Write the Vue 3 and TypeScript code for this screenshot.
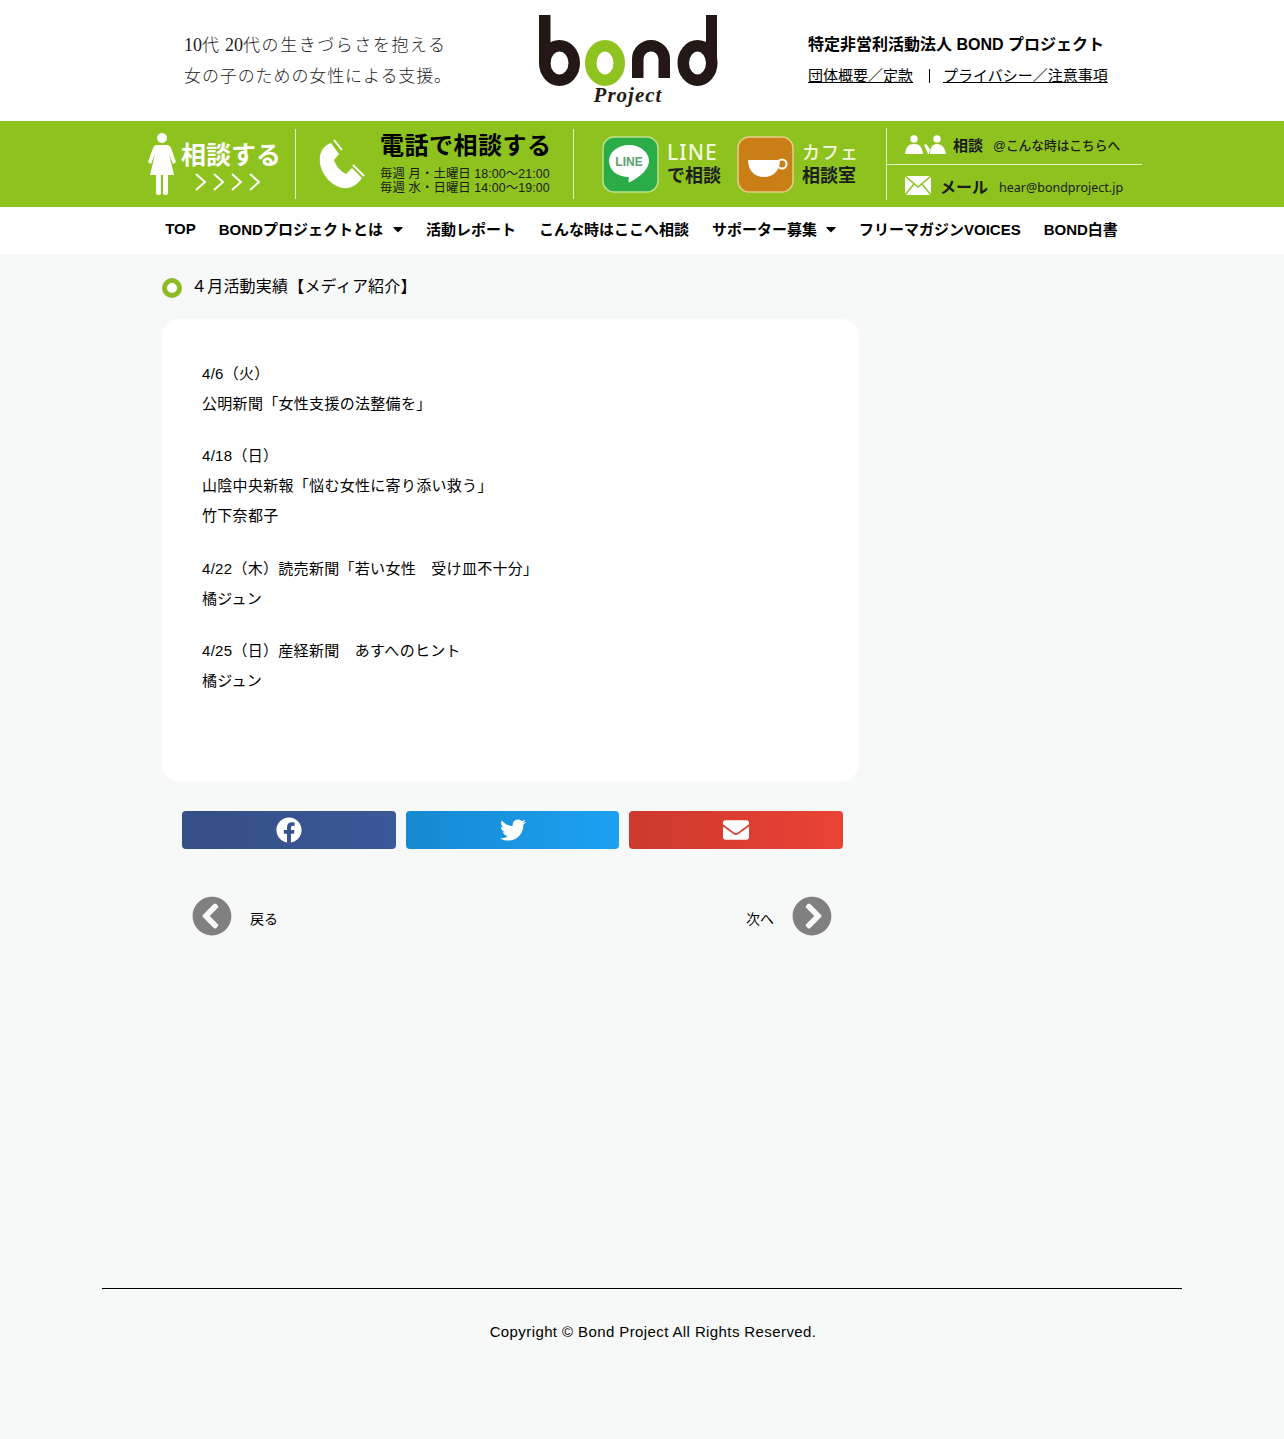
<template>
  <div class="page">
    <header class="top">
      <div class="slogan">
        <p>10<span class="j wide">代</span> 20<span class="j wide">代の生きづらさを抱える</span></p>
        <p class="j">女の子のための女性による支援。</p>
      </div>
      <div class="logo">
        <svg width="180" height="72" viewBox="0 0 180 72">
          <rect x="0" y="0" width="11.500" height="48" fill="#231815" />
          <ellipse cx="20.500" cy="48" rx="14.750" ry="17.250" fill="none" stroke="#231815" stroke-width="11.500" />
          <ellipse cx="66" cy="48" rx="14.250" ry="17.250" fill="none" stroke="#8fc31f" stroke-width="11.500" />
          <path d="M98.750 63V44a13.250 13.250 0 0 1 26.500 0v19" fill="none" stroke="#231815" stroke-width="11.500" />
          <ellipse cx="158.500" cy="48" rx="14.250" ry="17.250" fill="none" stroke="#231815" stroke-width="11.500" />
          <rect x="167" y="0" width="11" height="48" fill="#231815" />
        </svg>
        <span class="project">Project</span>
      </div>
      <div class="org">
        <strong>特定非営利活動法人 BOND プロジェクト</strong>
        <div class="org-links">
          <a>団体概要／定款</a>
          <i></i>
          <a>プライバシー／注意事項</a>
        </div>
      </div>
    </header>

    <div class="band">
      <div class="b-consult">
        <svg class="woman" width="28" height="62" viewBox="0 0 28 62" fill="#fff">
          <circle cx="14" cy="5" r="5" />
          <path d="M9 12h10c2 0 3 1 4 3l5 14-3 2-4-10 5 21H2l5-21-4 10-3-2 5-14c1-2 2-3 4-3z" />
          <rect x="8" y="41" width="5" height="21" rx="2" />
          <rect x="15" y="41" width="5" height="21" rx="2" />
        </svg>
        <div class="b-consult-text">
          <span>相談する</span>
          <svg width="66" height="18" viewBox="0 0 66 18" fill="none" stroke="#fff" stroke-width="2">
            <path v-for="x in chevrons" :key="x" :d="`M${x} 1l9 8-9 8`" />
          </svg>
        </div>
      </div>

      <div class="b-phone">
        <svg width="46" height="50" viewBox="0 0 46 50" fill="#fff" stroke="#fff">
          <path d="M12 4L20 15L15 21C17 27 21 32 27 35L33 29L43 39C38 46 32 50 24 49C9 46-1 30 1 17C2 11 6 6 12 4z" stroke="none" />
          <path d="M15 1l8 10" stroke-width="2" />
          <path d="M34 26l11 11" stroke-width="2" />
        </svg>
        <div class="b-phone-text">
          <b>電話で相談する</b>
          <small>毎週 月・土曜日 18:00～21:00</small>
          <small>毎週 水・日曜日 14:00～19:00</small>
        </div>
      </div>

      <div class="b-apps">
        <div class="app">
          <svg width="58" height="58" viewBox="0 0 58 58">
            <rect x="1" y="1" width="55" height="55" rx="11" fill="#2aac48" stroke="#bfe08a" stroke-width="1.500" />
            <path d="M27 9c11 0 20 7 20 16 0 8-9 16-19 21-1 .5-2 0-1.500-1.500l.5-3.500C15 41 7 34 7 25 7 16 16 9 27 9z" fill="#fff" />
            <text x="27" y="30" text-anchor="middle" class="line-mark">LINE</text>
          </svg>
          <div class="app-label"><span>LINE</span><b>で相談</b></div>
        </div>
        <div class="app">
          <svg width="58" height="58" viewBox="0 0 58 58">
            <rect x="1" y="1" width="55" height="55" rx="11" fill="#c97f16" stroke="#e3cf8a" stroke-width="1.500" />
            <path d="M11 24h32c0 10-6 17-16 17S11 34 11 24z" fill="#fff" />
            <circle cx="45" cy="28" r="4.500" fill="none" stroke="#fff" stroke-width="2" />
          </svg>
          <div class="app-label cafe"><span>カフェ</span><b>相談室</b></div>
        </div>
      </div>

      <div class="b-contact">
        <div class="c-row">
          <svg width="41" height="22" viewBox="0 0 41 22" fill="#fff">
            <circle cx="9" cy="5" r="3.700" />
            <path d="M0 20C1 13 3 10 9 10s8 3 9 10z" />
            <circle cx="32" cy="5" r="3.700" />
            <path d="M25 20c0-6 2-10 7-10s8 4 9 10z" />
            <path d="M19 11l2-1 4 5-1 5h-1z" />
          </svg>
          <b>相談</b>
          <span>@こんな時はこちらへ</span>
        </div>
        <div class="c-row mail">
          <svg width="26" height="19" viewBox="0 0 26 19">
            <rect width="26" height="19" fill="#fff" />
            <path d="M0 0l13 11L26 0M0 19l9-11M26 19l-9-11" fill="none" stroke="#8dc21f" stroke-width="1.500" />
          </svg>
          <b>メール</b>
          <span>hear@bondproject.jp</span>
        </div>
      </div>
    </div>

    <nav class="nav">
      <a v-for="item in navItems" :key="item.label">
        {{ item.label }}
        <svg v-if="item.caret" width="10" height="16" viewBox="0 0 320 512"><path :d="caret" /></svg>
      </a>
    </nav>

    <main class="main">
      <h1 class="title"><i class="dot"></i>４月活動実績【メディア紹介】</h1>
      <article class="card">
        <div v-for="(block, i) in blocks" :key="i" class="block">
          <p v-for="line in block" :key="line">{{ line }}</p>
        </div>
      </article>

      <div class="share">
        <a v-for="s in shares" :key="s.name" :class="s.name">
          <svg width="26" height="26" viewBox="0 0 512 512" fill="#fff"><path :d="s.d" /></svg>
        </a>
      </div>

      <div class="pager">
        <a class="pg">
          <svg width="40" height="40" viewBox="0 0 512 512" fill="#808080"><path :d="arrowLeft" /></svg>
          <span>戻る</span>
        </a>
        <a class="pg">
          <span>次へ</span>
          <svg width="40" height="40" viewBox="0 0 512 512" fill="#808080"><path :d="arrowRight" /></svg>
        </a>
      </div>
    </main>

    <footer class="foot">
      <div class="foot-line"></div>
      <p>Copyright © Bond Project All Rights Reserved.</p>
    </footer>
  </div>
</template>

<script setup lang="ts">
const chevrons = [1, 19, 37, 55];

const navItems = [
  { label: 'TOP', caret: false },
  { label: 'BONDプロジェクトとは', caret: true },
  { label: '活動レポート', caret: false },
  { label: 'こんな時はここへ相談', caret: false },
  { label: 'サポーター募集', caret: true },
  { label: 'フリーマガジンVOICES', caret: false },
  { label: 'BOND白書', caret: false },
];

const blocks: string[][] = [
  ['4/6（火）', '公明新聞「女性支援の法整備を」'],
  ['4/18（日）', '山陰中央新報「悩む女性に寄り添い救う」', '竹下奈都子'],
  ['4/22（木）読売新聞「若い女性　受け皿不十分」', '橘ジュン'],
  ['4/25（日）産経新聞　あすへのヒント', '橘ジュン'],
];

const caret = 'M31.3 192h257.3c17.8 0 26.7 21.5 14.1 34.1L174.1 354.8c-7.8 7.8-20.5 7.8-28.3 0L17.2 226.1C4.6 213.5 13.5 192 31.3 192z';
const arrowLeft = 'M256 504C119 504 8 393 8 256S119 8 256 8s248 111 248 248-111 248-248 248zM142.1 273l135.5 135.5c9.4 9.4 24.6 9.4 33.9 0l17-17c9.4-9.4 9.4-24.6 0-33.9L226.9 256l101.6-101.6c9.4-9.4 9.4-24.6 0-33.9l-17-17c-9.4-9.4-24.6-9.4-33.9 0L142.1 239c-9.4 9.4-9.4 24.6 0 34z';
const arrowRight = 'M256 8c137 0 248 111 248 248S393 504 256 504 8 393 8 256 119 8 256 8zm113.9 231L234.4 103.5c-9.4-9.4-24.6-9.4-33.9 0l-17 17c-9.4 9.4-9.4 24.6 0 33.9L285.1 256 183.5 357.6c-9.4 9.4-9.4 24.6 0 33.9l17 17c9.4 9.4 24.6 9.4 33.9 0L369.9 273c9.4-9.4 9.4-24.6 0-34z';

const shares = [
  {
    name: 'fb',
    d: 'M504 256C504 119 393 8 256 8S8 119 8 256c0 123.78 90.69 226.38 209.25 245V327.69h-63V256h63v-54.64c0-62.15 37-96.48 93.67-96.48 27.14 0 55.52 4.84 55.52 4.84v61h-31.28c-30.8 0-40.41 19.12-40.41 38.73V256h68.78l-11 71.69h-57.78V501C413.31 482.38 504 379.78 504 256z',
  },
  {
    name: 'tw',
    d: 'M459.37 151.716c.325 4.548.325 9.097.325 13.645 0 138.72-105.583 298.558-298.558 298.558-59.452 0-114.68-17.219-161.137-47.106 8.447.974 16.568 1.299 25.34 1.299 49.055 0 94.213-16.568 130.274-44.832-46.132-.975-84.792-31.188-98.112-72.772 6.498.974 12.995 1.624 19.818 1.624 9.421 0 18.843-1.3 27.614-3.573-48.081-9.747-84.143-51.98-84.143-102.985v-1.299c13.969 7.797 30.214 12.67 47.431 13.319-28.264-18.843-46.781-51.005-46.781-87.391 0-19.492 5.197-37.36 14.294-52.954 51.655 63.675 129.3 105.258 216.365 109.807-1.624-7.797-2.599-15.918-2.599-24.04 0-57.828 46.782-104.934 104.934-104.934 30.213 0 57.502 12.67 76.67 33.137 23.715-4.548 46.456-13.32 66.599-25.34-7.798 24.366-24.366 44.833-46.132 57.827 21.117-2.273 41.584-8.122 60.426-16.243-14.292 20.791-32.161 39.308-52.628 54.253z',
  },
  {
    name: 'ml',
    d: 'M502.3 190.8c3.9-3.1 9.7-.2 9.7 4.7V400c0 26.5-21.5 48-48 48H48c-26.5 0-48-21.5-48-48V195.6c0-5 5.7-7.8 9.7-4.7 22.4 17.4 52.1 39.5 154.1 113.6 21.1 15.4 56.7 47.8 92.2 47.6 35.7.3 72-32.8 92.3-47.6 102-74.1 131.6-96.3 154-113.7zM256 320c23.2.4 56.6-29.2 73.4-41.4 132.7-96.3 142.8-104.7 173.4-128.7 5.8-4.5 9.2-11.5 9.2-18.9v-19c0-26.5-21.5-48-48-48H48C21.5 64 0 85.5 0 112v19c0 7.4 3.4 14.3 9.2 18.9 30.6 23.9 40.7 32.4 173.4 128.7 16.8 12.2 50.2 41.8 73.4 41.4z',
  },
];
</script>

<style>
body {
  background: #f7f9f8;
}
</style>

<style scoped>
.page {
  min-height: 1439px;
  background: #f7f9f8;
  color: #000;
  font-family: 'Liberation Sans', 'Noto Sans CJK JP', sans-serif;
}
p,
h1 {
  margin: 0;
}

.top {
  display: flex;
  height: 121px;
  background: #fff;
  box-sizing: border-box;
  padding-left: 184px;
}
.slogan {
  width: 355px;
  padding-top: 28px;
  color: #1c1c1c;
  font-family: 'Liberation Serif', 'Noto Sans CJK JP', serif;
  font-size: 18px;
  font-weight: 300;
  white-space: nowrap;
}
.slogan p {
  height: 31px;
  line-height: 31px;
}
.slogan .j {
  font-family: 'Noto Sans CJK JP', sans-serif;
  font-size: 17px;
  letter-spacing: 0.900px;
}
.slogan .wide {
  letter-spacing: 1.550px;
}
.logo {
  position: relative;
  width: 269px;
  padding-top: 15px;
}
.logo svg {
  display: block;
}
.project {
  display: block;
  width: 178px;
  color: #231815;
  font-family: 'Liberation Serif', serif;
  font-size: 21px;
  font-style: italic;
  font-weight: 700;
  line-height: 17px;
  letter-spacing: 1px;
  text-align: center;
}
.org {
  padding-top: 34px;
  font-size: 16px;
}
.org strong {
  display: block;
  line-height: 22px;
}
.org-links {
  display: flex;
  align-items: center;
  margin-top: 9px;
  font-size: 15px;
  line-height: 22px;
}
.org-links a {
  text-decoration: underline;
}
.org-links i {
  width: 1px;
  height: 14px;
  margin: 0 13px 0 16px;
  background: #000;
}

.band {
  display: flex;
  height: 86px;
  padding-left: 148px;
  background: #8dc21f;
}
.b-consult {
  display: flex;
  width: 147px;
  height: 70px;
  padding-top: 12px;
  color: #fff;
  box-sizing: border-box;
}
.woman {
  flex: none;
}
.b-consult-text {
  display: flex;
  flex-direction: column;
  align-items: center;
  margin-left: 5px;
  padding-top: 6px;
  font-size: 25px;
  font-weight: 700;
  line-height: 32px;
  white-space: nowrap;
}
.b-consult-text svg {
  margin: 2px 6px 0 0;
}
.b-phone {
  display: flex;
  width: 278px;
  height: 70px;
  margin-top: 8px;
  padding-left: 23px;
  border-left: 1px solid #e4f0c4;
  box-sizing: border-box;
}
.b-phone svg {
  flex: none;
  margin-top: 10px;
}
.b-phone-text {
  margin-left: 15px;
  white-space: nowrap;
}
.b-phone-text b {
  display: block;
  font-size: 24px;
  line-height: 34px;
  letter-spacing: 0.500px;
}
.b-phone-text small {
  display: block;
  color: #1b1b1b;
  font-size: 12.400px;
  line-height: 14px;
  letter-spacing: 0.080px;
}
.b-phone-text b + small {
  margin-top: 4px;
}
.b-apps {
  display: flex;
  gap: 16px;
  width: 313px;
  height: 70px;
  margin-top: 8px;
  padding: 7px 0 0 28px;
  border-left: 1px solid #e4f0c4;
  box-sizing: border-box;
}
.app {
  display: flex;
  gap: 7px;
}
.line-mark {
  fill: #5f9f6c;
  font-family: 'Liberation Sans', sans-serif;
  font-size: 12px;
  font-weight: 700;
}
.app-label {
  display: flex;
  flex-direction: column;
  align-items: flex-start;
  padding-top: 3px;
  white-space: nowrap;
}
.app-label span {
  color: #f4fbdc;
  font-family: 'Noto Sans', sans-serif;
  font-size: 21px;
  font-weight: 500;
  line-height: 26px;
  letter-spacing: 1px;
}
.app-label b {
  color: #1d1d1d;
  font-size: 18px;
  line-height: 22px;
}
.app-label.cafe span {
  margin-top: -1px;
  font-family: 'Noto Sans CJK JP', sans-serif;
  font-size: 18px;
}
.app-label.cafe b {
  margin-top: 1px;
}
.b-contact {
  display: flex;
  flex-direction: column;
  width: 256px;
  height: 72px;
  margin-top: 7px;
  border-left: 1px solid #e4f0c4;
  box-sizing: border-box;
}
.c-row {
  display: flex;
  align-items: center;
  gap: 7px;
  height: 36px;
  padding: 0 0 3px 18px;
  box-sizing: border-box;
  color: #1b1b1b;
  white-space: nowrap;
}
.c-row b {
  font-size: 15px;
}
.c-row span {
  margin-left: 3px;
  font-size: 12.700px;
  font-weight: 500;
}
.mail {
  gap: 9px;
  padding: 6px 0 0 18px;
  border-top: 1px solid #e4f0c4;
}
.mail b {
  margin-top: 1px;
  font-size: 16px;
}
.mail span {
  margin: 3px 0 0 2px;
  font-family: 'Noto Sans', sans-serif;
  font-size: 12.500px;
  font-weight: 400;
}

.nav {
  display: flex;
  justify-content: center;
  gap: 23px;
  height: 47px;
  padding: 0 1px 4px 0;
  box-sizing: border-box;
  background: #fff;
  font-size: 15px;
  font-weight: 700;
  white-space: nowrap;
}
.nav a {
  display: flex;
  align-items: center;
  gap: 9px;
}
.nav a:nth-child(2) {
  gap: 10px;
}

.main {
  width: 960px;
  margin: 0 auto;
}
.title {
  display: flex;
  align-items: center;
  height: 65px;
  font-size: 16px;
  font-weight: 400;
  line-height: 24px;
  letter-spacing: 0.200px;
}
.dot {
  flex: none;
  width: 10px;
  height: 10px;
  margin: 3px 9px 0 0;
  border: 5px solid #8dbb25;
  border-radius: 50%;
  background: #fff;
}
.card {
  width: 697px;
  height: 462px;
  padding: 40px;
  border-radius: 18px;
  background: #fff;
  box-sizing: border-box;
  font-size: 15px;
  line-height: 30px;
  letter-spacing: 0.300px;
}
.block + .block {
  margin-top: 22.400px;
}
.share {
  display: flex;
  gap: 10px;
  width: 661px;
  margin: 30px 0 0 20px;
}
.share a {
  display: flex;
  flex: 1;
  align-items: center;
  justify-content: center;
  height: 38px;
  border-radius: 4px;
}
.fb {
  background: linear-gradient(90deg, #344e86, #3b5998);
}
.tw {
  background: linear-gradient(90deg, #1589d0, #1da1f2);
}
.ml {
  background: linear-gradient(90deg, #cb3a2c, #ea4335);
}
.pager {
  display: flex;
  justify-content: space-between;
  width: 640px;
  margin: 47px 0 0 30px;
}
.pg {
  display: flex;
  align-items: center;
  gap: 18px;
  font-size: 14px;
}
.pg span {
  margin-top: 3px;
}

.foot {
  width: 1080px;
  margin: 352px auto 0;
}
.foot-line {
  height: 1px;
  background: #000;
}
.foot p {
  padding: 32px 0 0 22px;
  font-size: 15px;
  line-height: 22px;
  letter-spacing: 0.400px;
  text-align: center;
}
</style>
